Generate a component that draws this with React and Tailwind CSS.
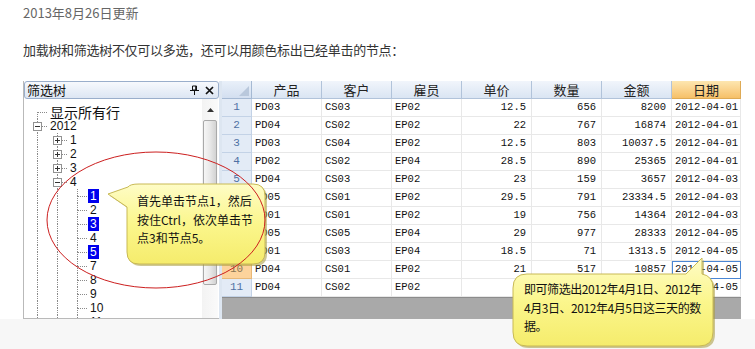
import React from 'react'

const rows = [
  ["PD03", "CS03", "EP02", "12.5", "656", "8200", "2012-04-01"],
  ["PD04", "CS02", "EP02", "22", "767", "16874", "2012-04-01"],
  ["PD03", "CS04", "EP02", "12.5", "803", "10037.5", "2012-04-01"],
  ["PD02", "CS02", "EP04", "28.5", "890", "25365", "2012-04-01"],
  ["PD04", "CS03", "EP02", "23", "159", "3657", "2012-04-03"],
  ["PD05", "CS01", "EP02", "29.5", "791", "23334.5", "2012-04-03"],
  ["PD01", "CS01", "EP02", "19", "756", "14364", "2012-04-03"],
  ["PD05", "CS05", "EP04", "29", "977", "28333", "2012-04-05"],
  ["PD01", "CS03", "EP04", "18.5", "71", "1313.5", "2012-04-05"],
  ["PD04", "CS01", "EP02", "21", "517", "10857", "2012-04-05"],
  ["PD04", "CS02", "EP02", "24", "622", "14928", "2012-04-05"],
]
const heads = ["产品", "客户", "雇员", "单价", "数量", "金额", "日期"]

// tree rows: cells = connector columns, last one holds the branch
const full = { top: true, bottom: true }
const tree = [
  { label: "显示所有行", cells: [{ top: false, bottom: true, h: true }], big: true },
  { label: "2012", cells: [{ ...full, h: true, box: "-" }] },
  { label: "1", cells: [full, { ...full, h: true, box: "+" }] },
  { label: "2", cells: [full, { ...full, h: true, box: "+" }] },
  { label: "3", cells: [full, { ...full, h: true, box: "+" }] },
  { label: "4", cells: [full, { ...full, h: true, box: "-" }] },
  { label: "1", cells: [full, full, { ...full, h: true }], sel: true },
  { label: "2", cells: [full, full, { ...full, h: true }] },
  { label: "3", cells: [full, full, { ...full, h: true }], sel: true },
  { label: "4", cells: [full, full, { ...full, h: true }] },
  { label: "5", cells: [full, full, { ...full, h: true }], sel: true },
  { label: "7", cells: [full, full, { ...full, h: true }] },
  { label: "8", cells: [full, full, { ...full, h: true }] },
  { label: "9", cells: [full, full, { ...full, h: true }] },
  { label: "10", cells: [full, full, { ...full, h: true }] },
  { label: "11", cells: [full, full, { ...full, h: true }] },
]

const Cell = ({ c }) => (
  <div className="relative flex w-[20px] h-[14px] shrink-0">
    <div className="w-[10px]" />
    <div className="flex flex-col w-[10px]">
      <div className={`h-[7px] ${c.top ? 'border-l border-dotted border-[#8a8a8a]' : ''}`} />
      <div className={`h-[7px] ${c.bottom ? 'border-l border-dotted border-[#8a8a8a]' : ''} ${c.h ? 'border-t border-dotted border-[#8a8a8a]' : ''}`} />
    </div>
    {c.box && (
      <div className="absolute left-[6px] top-[3px] w-[9px] h-[9px] border border-[#929292] bg-white flex items-center justify-center">
        <div className="relative w-[5px] h-[5px] flex items-center justify-center">
          <div className="w-[5px] h-px bg-[#333]" />
          {c.box === "+" && <div className="absolute left-[2px] top-0 w-px h-[5px] bg-[#333]" />}
        </div>
      </div>
    )}
  </div>
)

const Callout = ({ path, box, lines, textCls }) => (
  <>
    <svg className="absolute left-0 top-0 pointer-events-none" width="755" height="349" viewBox="0 0 755 349">
      <defs>
        <linearGradient id="yel" x1="0" y1="0" x2="0" y2="1">
          <stop offset="0" stopColor="#fefcc6" />
          <stop offset="0.5" stopColor="#fbf68c" />
          <stop offset="1" stopColor="#f5ec6c" />
        </linearGradient>
      </defs>
      <path d={path} transform="translate(2,2)" fill="#a89a3c" opacity="0.55" />
      <path d={path} fill="url(#yel)" stroke="#c8b955" strokeWidth="1" />
    </svg>
    <div className={`absolute ${box} ${textCls} text-[12px] leading-[18.5px] text-[#111] font-['Noto_Sans_CJK_SC',sans-serif]`}>
      {lines.map((l, i) => <div key={i} className="whitespace-nowrap">{l}</div>)}
    </div>
  </>
)

export default function App() {
  return (
    <div className="relative w-[755px] h-[349px] overflow-hidden bg-white flex flex-col font-['Noto_Sans_CJK_SC',sans-serif]">
      <div className="pl-[23px] pt-[4px] text-[13px] leading-[18px] text-[#666]">2013年8月26日更新</div>
      <div className="pl-[23px] mt-[19px] text-[13px] leading-[18px] text-[#333] tracking-[-0.3px]">加载树和筛选树不仅可以多选，还可以用颜色标出已经单击的节点：</div>

      <div className="mt-[22px] ml-[23px] flex w-[718px] h-[238px]">
        {/* left: filter tree */}
        <div className="w-[196px] flex flex-col border-l border-b border-[#b9b9b9] bg-white">
          <div className="h-[18px] flex items-center justify-between px-[2px] border border-[#9aaecb] rounded-[3px] bg-gradient-to-b from-[#f7f9fd] to-[#dde6f3]">
            <span className="text-[13px] leading-[16px] text-[#111]">筛选树</span>
            <div className="flex items-center gap-[6px] pr-[2px]">
              <svg width="9" height="10" viewBox="0 0 9 10">
                <path d="M2.5 1h4v4h-4z" fill="none" stroke="#111" strokeWidth="1" />
                <path d="M6 1v4" stroke="#111" strokeWidth="1.6" />
                <path d="M0 5.5h9M4.5 5.5V10" stroke="#111" strokeWidth="1" />
              </svg>
              <svg width="9" height="9" viewBox="0 0 9 9">
                <path d="M1 1l7 7M8 1L1 8" stroke="#111" strokeWidth="1.7" />
              </svg>
            </div>
          </div>
          <div className="flex flex-1 min-h-0">
            <div className="flex-1 pl-[3px] pt-[6px] overflow-hidden">
              {tree.map((t, i) => (
                <div key={i} className="flex items-center h-[14px]">
                  {t.cells.map((c, j) => <Cell key={j} c={c} />)}
                  <span
                    className={`ml-[1px] px-[2px] leading-[14px] ${t.big ? "text-[14px] font-['Noto_Sans_CJK_SC',sans-serif]" : "text-[12px] font-['Liberation_Sans',sans-serif]"} ${t.sel ? 'bg-[#0000ee] text-white' : 'text-[#111]'}`}
                  >
                    {t.label}
                  </span>
                </div>
              ))}
            </div>
            <div className="w-[16px] mr-px flex flex-col items-center bg-gradient-to-r from-[#f3f3f3] to-[#fafafa] pt-[9px]">
              <svg width="7" height="4" viewBox="0 0 7 4"><path d="M0 4L3.5 0 7 4z" fill="#333" /></svg>
              <div className="mt-[8px] w-[14px] h-[165px] rounded-[2px] border border-[#a9a9a9] bg-gradient-to-r from-[#f6f6f6] via-[#e8e8e8] to-[#d2d2d2]" />
            </div>
          </div>
        </div>

        <div className="w-[3px] bg-[#dde6f1]" />

        {/* right: grid */}
        <div className="flex-1 flex flex-col bg-white">
          <div className="flex h-[18px] shrink-0">
            <div className="w-[30px] border-r border-b border-[#a5b9d3] bg-gradient-to-b from-[#e9f0f9] to-[#d3dff0] flex items-end justify-end p-[2px]">
              <svg width="10" height="10" viewBox="0 0 10 10"><path d="M10 0V10H0z" fill="#b9c8dc" /></svg>
            </div>
            {heads.map((h, i) => (
              <div
                key={i}
                className={`${i === 6 ? 'w-[69px] bg-gradient-to-b from-[#fde6b0] to-[#f6c068] border-[#deaa55]' : 'w-[70px] bg-gradient-to-b from-[#f1f5fb] to-[#dae5f3] border-[#b1c3da]'} border-r border-b flex items-center justify-center text-[13px] leading-[16px] text-[#222]`}
              >
                {h}
              </div>
            ))}
          </div>
          {rows.map((r, i) => (
            <div key={i} className="flex h-[18px] shrink-0">
              <div className={`w-[30px] border-r border-b flex items-center justify-center font-['Liberation_Mono',monospace] text-[11px] ${i === 9 ? 'bg-[#fdd39c] border-[#e8b878] text-[#8a7654]' : 'bg-[#e3ebf6] border-[#c3d2e6] text-[#4f70a3]'}`}>
                {i + 1}
              </div>
              {r.map((v, j) => (
                <div
                  key={j}
                  className={`${j === 6 ? 'w-[69px]' : 'w-[70px]'} border-r border-b border-[#e8e8e8] flex items-center font-['Liberation_Mono',monospace] text-[10.5px] text-[#111] ${j >= 3 && j <= 5 ? 'justify-end pr-[5px]' : 'pl-[3px]'} ${i === 9 && j === 6 ? 'outline outline-1 -outline-offset-1 outline-[#4a86d4]' : ''}`}
                >
                  {v}
                </div>
              ))}
            </div>
          ))}
          <div className="flex-1 bg-[#a9a9a9] border-t border-[#8c8c8c]" />
        </div>
      </div>
      <div className="flex-1 bg-[#f7f7f7]" />

      <Callout
        path="M139,184 H253 Q265,184 265,196 V252 Q265,264 253,264 H139 Q127,264 127,252 V207 L108,194 L128,187 Q130,184 139,184 Z"
        box="left-[137px] top-[192px]"
        textCls=""
        lines={["首先单击节点1，然后", "按住Ctrl，依次单击节", "点3和节点5。"]}
      />
      <Callout
        path="M527,274 H686 L702,258 L702,274 Q713,276 713,288 V332 Q713,346 699,346 H527 Q513,346 513,332 V288 Q513,274 527,274 Z"
        box="left-[524px] top-[280px]"
        textCls="tracking-[-0.45px]"
        lines={["即可筛选出2012年4月1日、2012年", "4月3日、2012年4月5日这三天的数", "据。"]}
      />

      <svg className="absolute left-0 top-0 pointer-events-none" width="755" height="349" viewBox="0 0 755 349">
        <ellipse cx="156" cy="220" rx="109" ry="68" fill="none" stroke="#cc1f1f" strokeWidth="1" />
      </svg>
    </div>
  )
}
